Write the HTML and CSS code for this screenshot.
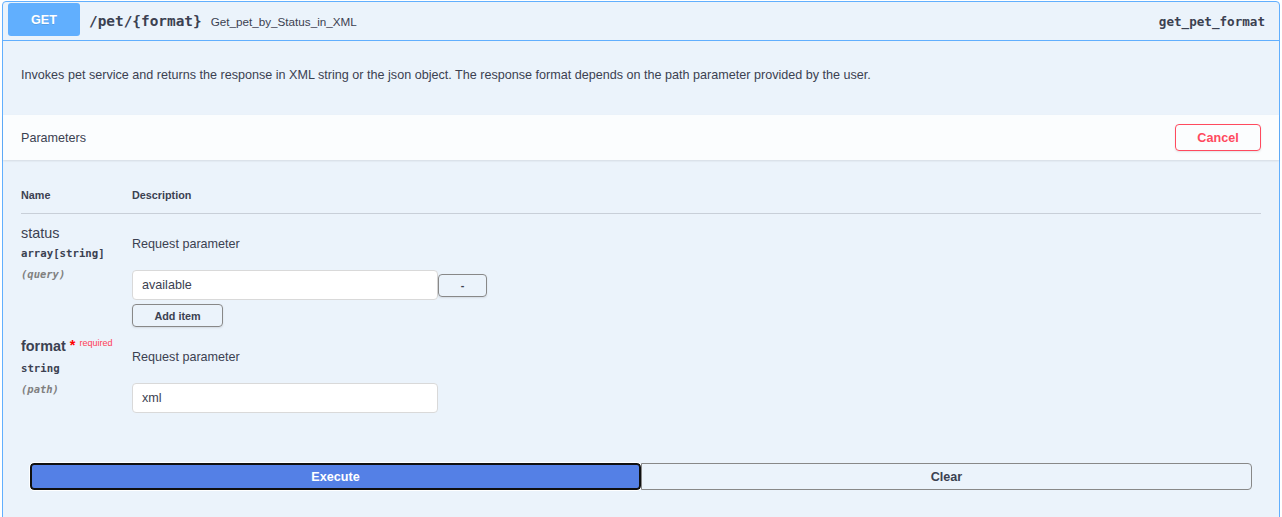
FILE: index.html
```html
<!DOCTYPE html>
<html>
<head>
<meta charset="utf-8">
<link rel="stylesheet" href="styles.css">
</head>
<body>
<div class="opblock">
  <div class="summary">
    <span class="method">GET</span>
    <span class="path">/pet/{format}</span>
    <span class="summary-desc">Get_pet_by_Status_in_XML</span>
    <span class="op-id">get_pet_format</span>
  </div>
  <div class="description">
    <p>Invokes pet service and returns the response in XML string or the json object. The response format depends on the path parameter provided by the user.</p>
  </div>
  <div class="section-header">
    <h4 class="section-title">Parameters</h4>
    <button class="btn-cancel">Cancel</button>
  </div>
  <div class="params">
    <div class="params-head">
      <div class="col-name">Name</div>
      <div class="col-desc">Description</div>
    </div>
    <div class="param-row">
      <div class="col-name">
        <div class="param-name">status</div>
        <div class="param-type">array[string]</div>
        <div class="param-in">(query)</div>
      </div>
      <div class="col-desc">
        <div class="param-text">Request parameter</div>
        <div class="array-item">
          <div class="input">available</div>
          <button class="btn-small btn-minus">-</button>
        </div>
        <button class="btn-small btn-add">Add item</button>
      </div>
    </div>
    <div class="param-row">
      <div class="col-name">
        <div class="param-name required">format<span class="star">&nbsp;*</span><span class="req-label">required</span></div>
        <div class="param-type">string</div>
        <div class="param-in">(path)</div>
      </div>
      <div class="col-desc">
        <div class="param-text">Request parameter</div>
        <div class="array-item">
          <div class="input">xml</div>
        </div>
      </div>
    </div>
  </div>
  <div class="btn-group">
    <button class="btn-execute">Execute</button>
    <button class="btn-clear">Clear</button>
  </div>
</div>
</body>
</html>
```
FILE: styles.css
```css
html, body {
  margin: 0;
  padding: 0;
  background: #ffffff;
}
body {
  padding: 1px 0 0 2px;
  font-family: "Liberation Sans", Arial, sans-serif;
  color: #3b4151;
}
.opblock {
  width: 1278px;
  box-sizing: border-box;
  border: 1px solid #61affe;
  border-radius: 4px;
  background: #ebf3fb;
  min-height: 530px;
}
.summary {
  display: flex;
  align-items: center;
  height: 39px;
  box-sizing: border-box;
  padding: 1px 5px 4px 5px;
  border-bottom: 1px solid #61affe;
}
.method {
  width: 72px;
  height: 33px;
  box-sizing: border-box;
  padding-top: 2px;
  line-height: 31px;
  text-align: center;
  background: #61affe;
  color: #fff;
  font-weight: bold;
  font-size: 12.6px;
  border-radius: 3px;
  text-shadow: 0 1px 0 rgba(0,0,0,.1);
}
.path {
  font-family: "DejaVu Sans Mono", monospace;
  font-weight: bold;
  font-size: 14.4px;
  padding: 3px 9px 0;
  color: #3b4151;
}
.summary-desc {
  font-size: 11.7px;
  flex: 1;
  padding-top: 3px;
  color: #3b4151;
}
.op-id {
  font-family: "DejaVu Sans Mono", monospace;
  font-weight: bold;
  font-size: 12.6px;
  padding: 3px 9px 0;
}
.description {
  padding: 25px 18px 31px;
}
.description p {
  margin: 0;
  font-size: 12.6px;
  line-height: 18px;
}
.section-header {
  display: flex;
  align-items: center;
  height: 45px;
  box-sizing: border-box;
  padding: 0 18px;
  background: rgba(255,255,255,.8);
  box-shadow: 0 1px 2px rgba(0,0,0,.1);
}
.section-title {
  flex: 1;
  margin: 0;
  font-size: 12.6px;
  font-weight: normal;
}
.btn-cancel {
  width: 86px;
  height: 27px;
  box-sizing: border-box;
  border: 1.5px solid #ff4a5e;
  border-radius: 4px;
  background: transparent;
  color: #ff4a5e;
  font-family: "Liberation Sans", Arial, sans-serif;
  font-weight: bold;
  font-size: 12.6px;
  padding: 0;
  box-shadow: 0 1px 2px rgba(0,0,0,.1);
}
.params {
  padding: 28px 18px 0;
}
.params-head {
  display: grid;
  grid-template-columns: 111px 1fr;
  font-size: 10.8px;
  font-weight: bold;
  line-height: 14px;
  padding-bottom: 11px;
  border-bottom: 1px solid rgba(59,65,81,.2);
}
.param-row {
  display: grid;
  grid-template-columns: 111px 1fr;
  padding-top: 10px;
}
.param-name {
  font-size: 14.4px;
  line-height: 18px;
}
.param-name.required {
  font-weight: bold;
}
.star {
  color: #ff0000;
  position: relative;
  top: -1px;
}
.req-label {
  font-size: 9px;
  font-weight: normal;
  color: #ff3b55;
  position: relative;
  top: -5px;
  padding-left: 4px;
}
.param-type {
  margin-top: 2px;
  font-family: "DejaVu Sans Mono", monospace;
  font-weight: bold;
  font-size: 10.7px;
  line-height: 20px;
}
.param-in {
  font-family: "DejaVu Sans Mono", monospace;
  font-style: italic;
  font-weight: bold;
  font-size: 10.5px;
  line-height: 20px;
  color: #808080;
}
.param-text {
  margin-top: 11px;
  font-size: 12.6px;
  line-height: 18px;
}
.array-item {
  display: flex;
  align-items: center;
  margin-top: 17px;
}
.input {
  width: 306px;
  height: 30px;
  box-sizing: border-box;
  border: 1px solid #d9d9d9;
  border-radius: 4px;
  background: #fff;
  padding: 0 9px;
  font-size: 12.6px;
  line-height: 28px;
}
.btn-small {
  box-sizing: border-box;
  height: 23px;
  border: 1.5px solid #888;
  border-radius: 4px;
  background: transparent;
  font-family: "Liberation Sans", Arial, sans-serif;
  font-weight: bold;
  font-size: 10.8px;
  color: #3b4151;
  padding: 0;
  box-shadow: 0 1px 2px rgba(0,0,0,.1);
}
.btn-minus {
  width: 49px;
}
.btn-add {
  width: 91px;
  margin-top: 4px;
  display: block;
}
.btn-group {
  display: flex;
  padding: 50px 27px 30px;
}
.btn-execute, .btn-clear {
  height: 27px;
  box-sizing: border-box;
  font-family: "Liberation Sans", Arial, sans-serif;
  font-weight: bold;
  font-size: 12.6px;
  padding: 0;
}
.btn-execute {
  width: 611px;
  background: #5480e6;
  color: #fff;
  border: 2px solid #101010;
  border-radius: 4px;
  outline: 1px solid #ffffff;
}
.btn-clear {
  flex: 1;
  background: transparent;
  color: #3b4151;
  border: 1px solid #888;
  border-radius: 0 4px 4px 0;
}
```
